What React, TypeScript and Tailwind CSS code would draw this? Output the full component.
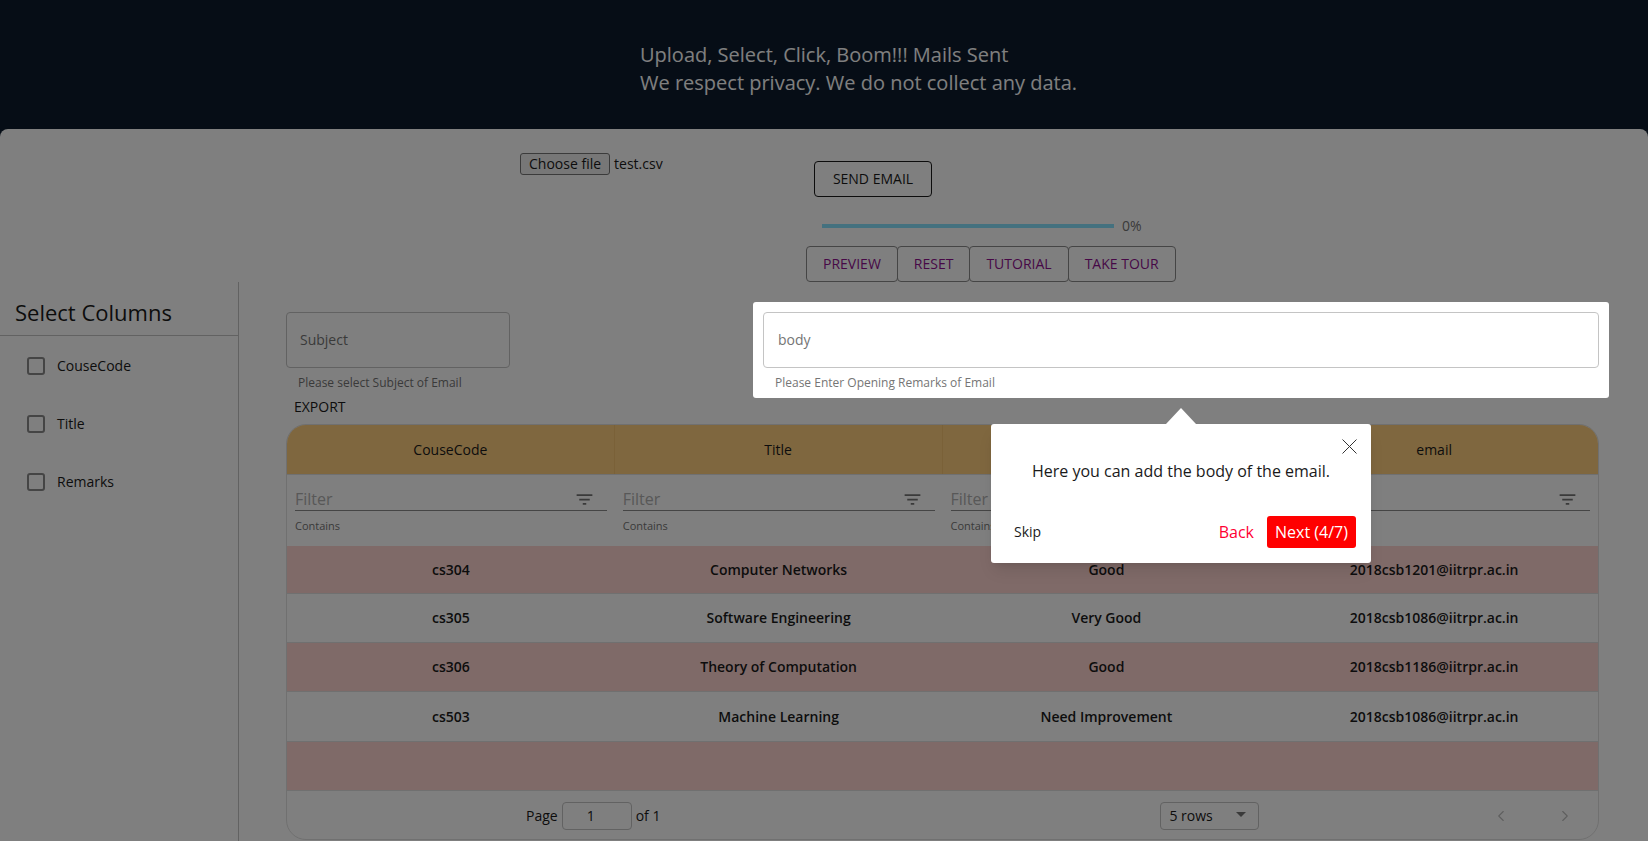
import { ChevronLeft, ChevronRight } from 'lucide-react'

const columns = ['CouseCode', 'Title', 'Remarks', 'email']

const rows = [
  ['cs304', 'Computer Networks', 'Good', '2018csb1201@iitrpr.ac.in'],
  ['cs305', 'Software Engineering', 'Very Good', '2018csb1086@iitrpr.ac.in'],
  ['cs306', 'Theory of Computation', 'Good', '2018csb1186@iitrpr.ac.in'],
  ['cs503', 'Machine Learning', 'Need Improvement', '2018csb1086@iitrpr.ac.in'],
  ['', '', '', ''],
]

const rowHeights = ['h-[48px]', 'h-[49px]', 'h-[49px]', 'h-[50px]', 'h-[49px]']

function OutlineButton({ label }: { label: string }) {
  return (
    <button className="h-9 px-4 -ml-px first:ml-0 rounded border border-[#8a8a8a] text-sm font-medium text-[#8e118e]">
      {label}
    </button>
  )
}

function FilterCell() {
  return (
    <div className="px-2 pt-[14px]">
      <div className="flex h-[20px] items-center justify-between border-b border-[#8a8a8a] box-content pb-px">
        <span className="text-base text-[#b0b0b0]">Filter</span>
        <svg viewBox="0 0 24 24" className="mr-3 h-[21px] w-[21px] fill-[#757575]">
          <path d="M10 18h4v-2h-4v2zM3 6v2h18V6H3zm3 7h12v-2H6v2z" />
        </svg>
      </div>
      <div className="mt-[7px] text-[11px] leading-4 text-[#757575]">Contains</div>
    </div>
  )
}

export default function App() {
  return (
    <div className="relative flex h-[841px] w-full flex-col overflow-hidden bg-[#0c1a2c] font-['Open_Sans',sans-serif] text-[#1a1a1a]">
      <header className="h-[129px] shrink-0 pl-[640px] pt-[41px] text-[20px] leading-7 text-white">
        <p>Upload, Select, Click, Boom!!! Mails Sent</p>
        <p>We respect privacy. We do not collect any data.</p>
      </header>

      <main className="flex-1 rounded-t-lg bg-white">
        <div className="flex h-[153px]">
          <div className="ml-[520px] mt-6 flex h-[22px] w-[286px] items-center text-sm">
            <button className="h-[22px] rounded-[3px] border border-[#767676] bg-[#efefef] px-2 text-sm leading-4">
              Choose file
            </button>
            <span className="ml-1">test.csv</span>
          </div>
          <div className="flex flex-col">
            <button className="ml-2 mt-8 h-9 w-[118px] rounded border border-[#1a1a1a] text-sm font-medium">
              SEND EMAIL
            </button>
            <div className="ml-4 mt-[26px] flex h-[5px] items-center">
              <div className="h-[4px] w-[292px] bg-[#88e2ff]" />
              <span className="ml-2 text-sm text-[#757575]">0%</span>
            </div>
            <div className="mt-[18px] flex">
              {['PREVIEW', 'RESET', 'TUTORIAL', 'TAKE TOUR'].map((label) => (
                <OutlineButton key={label} label={label} />
              ))}
            </div>
          </div>
        </div>

        <div className="flex">
          <aside className="h-[559px] w-[239px] shrink-0 border-r border-[#c4c4c4]">
            <h2 className="flex h-[54px] items-end border-b border-[#c4c4c4] pb-[7px] pl-[15px] text-[22px] leading-8">
              Select Columns
            </h2>
            <ul className="mt-[1px]">
              {columns.slice(0, 3).map((col) => (
                <li key={col} className="flex h-[58px] items-center pl-[27px] text-sm">
                  <span className="h-[18px] w-[18px] rounded-[3px] border-2 border-[#8a8a8a]" />
                  <span className="ml-3">{col}</span>
                </li>
              ))}
            </ul>
          </aside>

          <section className="flex-1 pl-[47px] pr-[49px] pt-[30px]">
            <div className="flex h-[82px] items-start justify-between">
              <div className="w-[224px]">
                <div className="flex h-[56px] items-center rounded border border-[#c4c4c4] pl-[13px] text-sm text-[#757575]">
                  Subject
                </div>
                <p className="ml-3 mt-[7px] text-[12px] leading-4 text-[#757575]">Please select Subject of Email</p>
              </div>
              <div className="relative z-20 -mr-[10px] -mt-[10px] h-[96px] w-[856px] rounded-[3px] bg-white p-[10px]">
                <div className="flex h-[56px] items-center rounded border border-[#c4c4c4] pl-[14px] text-sm text-[#757575]">
                  body
                </div>
                <p className="ml-3 mt-[7px] text-[12px] leading-4 text-[#757575]">Please Enter Opening Remarks of Email</p>
              </div>
            </div>
            <div className="flex h-[30px] items-center pl-2 pb-[4px] text-sm">EXPORT</div>

            <div className="h-[416px] overflow-hidden rounded-[20px] border border-[#e0e0e0]">
              <div className="grid h-[49px] grid-cols-4 bg-[#ffce7e]">
                {columns.map((col) => (
                  <div key={col} className="flex items-center justify-center border-r border-[#f5c371] text-sm last:border-r-0">
                    {col}
                  </div>
                ))}
              </div>
              <div className="grid h-[72px] grid-cols-4 border-t border-[#e0e0e0]">
                {columns.map((col) => (
                  <FilterCell key={col} />
                ))}
              </div>
              {rows.map((row, i) => (
                <div
                  key={i}
                  className={`grid grid-cols-4 border-b border-[#e0e0e0] ${rowHeights[i]} ${i % 2 === 0 ? 'bg-[#ffd5d0]' : 'bg-white'}`}
                >
                  {row.map((cell, j) => (
                    <div key={j} className="flex items-center justify-center text-sm font-semibold">
                      {cell}
                    </div>
                  ))}
                </div>
              ))}
              <div className="flex h-[50px] items-center text-sm">
                <div className="ml-[239px] flex items-center">
                  <span>Page</span>
                  <span className="mx-1 flex h-[28px] w-[70px] items-center rounded border border-[#c4c4c4] pl-6">1</span>
                  <span>of 1</span>
                </div>
                <div className="ml-[500px] flex h-[28px] w-[99px] items-center justify-between rounded border border-[#c4c4c4] pl-2 pr-3">
                  <span>5 rows</span>
                  <span className="mb-1 h-0 w-0 border-x-[5px] border-t-[5px] border-x-transparent border-t-[#757575]" />
                </div>
                <div className="ml-auto mr-[24px] flex gap-[46px] text-[#bdbdbd]">
                  <ChevronLeft size={18} strokeWidth={1.5} />
                  <ChevronRight size={18} strokeWidth={1.5} />
                </div>
              </div>
            </div>
          </section>
        </div>
      </main>

      <div className="absolute inset-0 z-10 bg-black/50" />

      <div className="absolute left-[991px] top-[424px] z-30 h-[139px] w-[380px] rounded-[3px] bg-white text-[#1a1a1a] shadow-lg">
        <svg viewBox="0 0 30 16" className="absolute -top-4 left-[175px] h-4 w-[30px] fill-white">
          <path d="M15 0 30 16H0z" />
        </svg>
        <svg viewBox="0 0 15 15" className="absolute right-[14px] top-[15px] h-[15px] w-[15px] stroke-[#333]">
          <path d="M0.5 0.5 14.5 14.5M14.5 0.5 0.5 14.5" fill="none" />
        </svg>
        <p className="pt-[35px] text-center text-base leading-6">Here you can add the body of the email.</p>
        <div className="mt-[33px] flex items-center justify-between pl-[23px] pr-[15px]">
          <span className="text-sm">Skip</span>
          <div className="flex items-center gap-[13px] text-base">
            <span className="text-[#ff0033]">Back</span>
            <span className="flex h-8 w-[89px] items-center justify-center rounded-[3px] bg-[#ff0000] text-white">Next (4/7)</span>
          </div>
        </div>
      </div>
    </div>
  )
}
